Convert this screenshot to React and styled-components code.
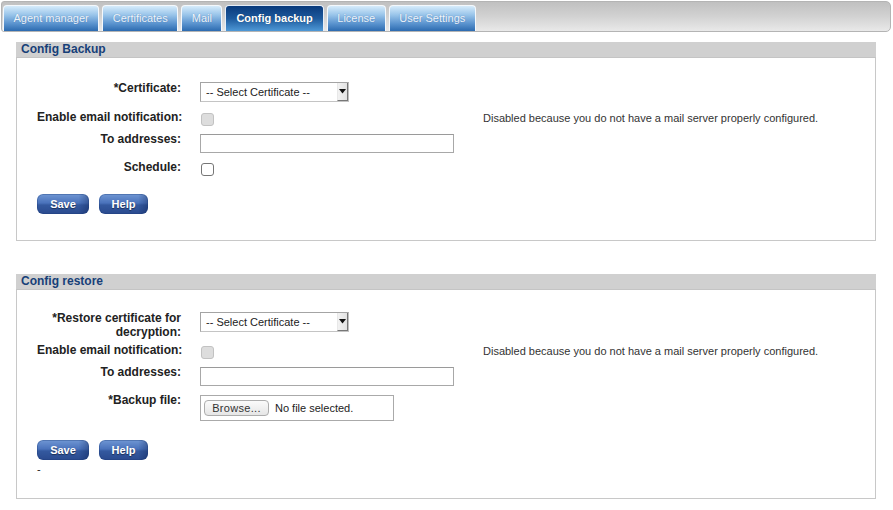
import styled, { createGlobalStyle } from "styled-components";

const GlobalStyle = createGlobalStyle`
  html, body {
    margin: 0;
    padding: 0;
    background: #ffffff;
    font-family: "Liberation Sans", Arial, sans-serif;
    color: #222222;
  }
`;

const tabs = ["Agent manager", "Certificates", "Mail", "Config backup", "License", "User Settings"];

const Page = () => {
    return (
        <PageWrapper>
            <GlobalStyle />
            <TabBar>
                {tabs.map( tab => (
                    <Tab key={tab} active={tab === "Config backup"}>{tab}</Tab>
                ) )}
            </TabBar>

            <Section>
                <SectionTitle>Config Backup</SectionTitle>
                <Panel>
                    <FormRow>
                        <Label>*Certificate:</Label>
                        <Field>
                            <Select text="-- Select Certificate --" />
                        </Field>
                    </FormRow>
                    <FormRow>
                        <Label>Enable email notification:</Label>
                        <Field>
                            <Checkbox type="checkbox" disabled />
                        </Field>
                        <Note>Disabled because you do not have a mail server properly configured.</Note>
                    </FormRow>
                    <FormRow>
                        <Label>To addresses:</Label>
                        <Field>
                            <TextInput type="text" />
                        </Field>
                    </FormRow>
                    <FormRow>
                        <Label>Schedule:</Label>
                        <Field>
                            <Checkbox type="checkbox" />
                        </Field>
                    </FormRow>
                    <ButtonRow>
                        <Button width={52}>Save</Button>
                        <Button width={49}>Help</Button>
                    </ButtonRow>
                </Panel>
            </Section>

            <Section $spaced>
                <SectionTitle>Config restore</SectionTitle>
                <Panel $tight>
                    <FormRow>
                        <Label>*Restore certificate for<br />decryption:</Label>
                        <Field>
                            <Select text="-- Select Certificate --" />
                        </Field>
                    </FormRow>
                    <FormRow>
                        <Label>Enable email notification:</Label>
                        <Field>
                            <Checkbox type="checkbox" disabled />
                        </Field>
                        <Note>Disabled because you do not have a mail server properly configured.</Note>
                    </FormRow>
                    <FormRow>
                        <Label>To addresses:</Label>
                        <Field>
                            <TextInput type="text" />
                        </Field>
                    </FormRow>
                    <FormRow>
                        <Label>*Backup file:</Label>
                        <Field>
                            <FileBox>
                                <BrowseButton>Browse...</BrowseButton>
                                <FileName>No file selected.</FileName>
                            </FileBox>
                        </Field>
                    </FormRow>
                    <ButtonRow>
                        <Button width={52}>Save</Button>
                        <Button width={49}>Help</Button>
                    </ButtonRow>
                    <Dash>-</Dash>
                </Panel>
            </Section>
        </PageWrapper>
    )
};

// fake select, the arrow box sits over the right end
const Select = ( { text } ) => (
    <SelectBox>
        <SelectText>{text}</SelectText>
        <SelectArrow>
            <svg width="7" height="5" viewBox="0 0 7 5">
                <path d="M0 0 L7 0 L3.5 4.5 Z" fill="#111" />
            </svg>
        </SelectArrow>
    </SelectBox>
);

const PageWrapper = styled.div`
    padding-top: 1px;
    padding-bottom: 12px;
`;

const TabBar = styled.div`
    display: flex;
    align-items: flex-end;
    gap: 3px;
    margin-left: 1px;
    width: 887px;
    height: 29px;
    padding: 0 0 0 1px;
    border: 1px solid #b4b4b4;
    border-radius: 3px 5px 5px 3px;
    background: linear-gradient(to bottom, #c0c0c0 0%, #d2d2d2 50%, #e9e9e9 100%);
    box-sizing: content-box;
`;

const Tab = styled.div`
    height: 25px;
    line-height: 25px;
    padding: 0 ${props => props.active ? "10px" : "9.5px"};
    font-size: 11px;
    font-weight: ${props => props.active ? "bold" : "normal"};
    color: ${props => props.active ? "#ffffff" : "#eef4fb"};
    border: 1px solid ${props => props.active ? "#e6eef8" : "#f4f8fc"};
    border-bottom: none;
    border-radius: 4px 4px 0 0;
    background: ${props => props.active
        ? "linear-gradient(to bottom, #093a7c 0%, #1d5a9d 50%, #4e98d6 100%)"
        : "linear-gradient(to bottom, #d6ecfb 0%, #9ac5ea 35%, #5b94cf 70%, #2c6bb0 100%)"};
    text-shadow: ${props => props.active ? "0 0 1px rgba(0,0,0,0.4)" : "0 0 1px rgba(30,80,140,0.5)"};
    white-space: nowrap;
`;

const Section = styled.div`
    margin: ${props => props.$spaced ? "33px" : "10px"} 17px 0 16px;
`;

const SectionTitle = styled.div`
    height: 15px;
    line-height: 15px;
    padding-left: 5px;
    font-size: 12px;
    font-weight: bold;
    color: #173f78;
    background: #d0d0d0;
    border-bottom: 1px solid #c4c4c4;
`;

const Panel = styled.div`
    padding: ${props => props.$tight ? "21px 0 25px 20px" : "23px 0 26px 20px"};
    border: 1px solid #c8c8c8;
    border-top: none;
`;

const FormRow = styled.div`
    display: grid;
    grid-template-columns: 144px 283px 1fr;
    column-gap: 19px;
    align-items: start;
`;

const Label = styled.div`
    text-align: right;
    font-size: 12px;
    font-weight: bold;
    line-height: 14px;
    color: #222;
    white-space: nowrap;
    padding-bottom: 4px;
`;

const Field = styled.div`
    display: flex;
    align-items: flex-start;
`;

const Note = styled.div`
    margin-left: -19px;
    font-size: 11px;
    line-height: 14px;
    padding-top: 1px;
    color: #333;
`;

const SelectBox = styled.div`
    position: relative;
    display: flex;
    align-items: center;
    width: 147px;
    height: 18px;
    margin: 1px 0 8px 0;
    border: 1px solid #a4a4a4;
    border-right-color: #c0c0c0;
    border-bottom-color: #c4c4c4;
    background: #fff;
`;

const SelectText = styled.span`
    padding-left: 5px;
    font-size: 11px;
    color: #222;
`;

const SelectArrow = styled.span`
    position: absolute;
    right: 0;
    top: 0;
    bottom: 0;
    width: 11px;
    display: flex;
    align-items: center;
    justify-content: center;
    background: linear-gradient(to right, #f2f2f2, #e2e2e2);
    border-left: 1px solid #e8e8e8;
    border-right: 1px solid #777;
    border-bottom: 1px solid #777;
    box-sizing: border-box;
`;

const Checkbox = styled.input`
    appearance: none;
    -webkit-appearance: none;
    width: 13px;
    height: 13px;
    margin: 3px 0 6px 1px;
    border: 1px solid ${props => props.disabled ? "#c2c2c2" : "#767676"};
    border-radius: 3px;
    background: ${props => props.disabled ? "#dddddd" : "#ffffff"};
    box-sizing: border-box;
`;

const TextInput = styled.input`
    width: 254px;
    height: 19px;
    margin: 2px 0 7px 0;
    padding: 0 3px;
    border: 1px solid #a8a8a8;
    border-top-color: #9a9a9a;
    box-sizing: border-box;
    font-family: "Liberation Sans", Arial, sans-serif;
    font-size: 11px;
    outline: none;
`;

const FileBox = styled.div`
    display: flex;
    align-items: center;
    gap: 6px;
    width: 194px;
    height: 26px;
    margin: 2px 0 7px 0;
    padding-left: 3px;
    border: 1px solid #aaaaaa;
    box-sizing: border-box;
`;

const BrowseButton = styled.div`
    width: 65px;
    height: 16px;
    line-height: 15px;
    text-align: center;
    font-size: 11px;
    letter-spacing: 0.3px;
    color: #333;
    border: 1px solid #adadad;
    border-radius: 4px;
    background: linear-gradient(to bottom, #fbfbfb, #e6e6e6);
    box-sizing: border-box;
`;

const FileName = styled.span`
    font-size: 11px;
    color: #222;
`;

const ButtonRow = styled.div`
    display: flex;
    gap: 10px;
    margin-top: 12px;
`;

const Button = styled.div`
    width: ${props => props.width}px;
    height: 20px;
    line-height: 20px;
    text-align: center;
    font-size: 11px;
    font-weight: bold;
    color: #ffffff;
    text-shadow: 0 1px 1px rgba(0,0,0,0.45);
    border-radius: 6px;
    background:
        linear-gradient(to right, rgba(0,0,0,0) 80%, rgba(10,30,80,0.35) 100%),
        linear-gradient(to bottom, #7097d4 0%, #4a72bb 45%, #34599f 55%, #2a4a8e 100%);
    box-shadow: inset 0 0 0 1px rgba(30,60,120,0.35);
`;

const Dash = styled.div`
    margin-top: 3px;
    height: 10px;
    font-size: 11px;
    line-height: 12px;
    color: #222;
`;

const App = () => <Page />;

export default App;
